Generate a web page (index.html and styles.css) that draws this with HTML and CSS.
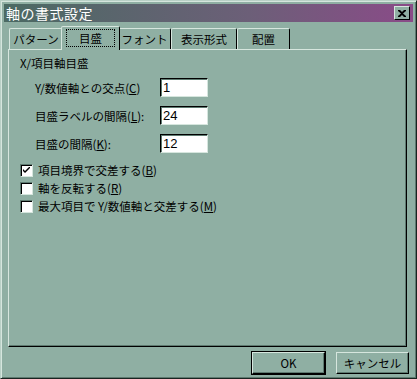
FILE: index.html
```html
<!DOCTYPE html>
<html lang="ja">
  <head>
    <meta charset="UTF-8" />
    <title>軸の書式設定</title>
    <link rel="stylesheet" href="styles.css">
  </head>
  <body>
    <div class="window">
      <div class="titlebar">
        <span class="title">軸の書式設定</span>
        <span class="close">
          <svg width="8" height="7" viewBox="0 0 8 7">
            <path d="M0 0h2l2 2 2-2h2v1L5 3.5 8 6v1H6L4 5 2 7H0V6l3-2.5L0 1z" fill="#000" />
          </svg>
        </span>
      </div>

      <div class="tabs">
        <div class="tab">パターン</div>
        <div class="tab selected"><span class="focus">目盛</span></div>
        <div class="tab">フォント</div>
        <div class="tab">表示形式</div>
        <div class="tab">配置</div>
      </div>

      <div class="panel">
        <div class="group-label">X/項目軸目盛</div>
        <div class="field">
          <label>Y/数値軸との交点(<u>C</u>)</label>
          <div class="input">1</div>
        </div>
        <div class="field">
          <label>目盛ラベルの間隔(<u>L</u>):</label>
          <div class="input">24</div>
        </div>
        <div class="field">
          <label>目盛の間隔(<u>K</u>):</label>
          <div class="input">12</div>
        </div>

        <div class="checks">
          <div class="check">
            <span class="box checked">
              <svg width="7" height="7" viewBox="0 0 7 7">
                <path d="M0 2l2 2 5-5v2L2 6 0 4z" fill="#000" />
              </svg>
            </span>
            <span>項目境界で交差する(<u>B</u>)</span>
          </div>
          <div class="check">
            <span class="box"></span>
            <span>軸を反転する(<u>R</u>)</span>
          </div>
          <div class="check">
            <span class="box"></span>
            <span>最大項目で Y/数値軸と交差する(<u>M</u>)</span>
          </div>
        </div>
      </div>

      <div class="buttons">
        <div class="btn default"><span>OK</span></div>
        <div class="btn"><span>キャンセル</span></div>
      </div>
    </div>
  </body>
</html>
```

FILE: styles.css
```css
* {
  box-sizing: border-box;
  margin: 0;
  padding: 0;
}

body {
  width: 417px;
  height: 379px;
  font-family: "Noto Sans CJK JP", "Liberation Sans", sans-serif;
  font-size: 11.5px;
  color: #000;
  background-color: #8fafa3;
}

u {
  text-underline-offset: 1px;
}

.window {
  width: 417px;
  height: 379px;
  padding: 3px;
  border: 1px solid;
  border-color: #b9d0c6 #1a2420 #1a2420 #b9d0c6;
  box-shadow: inset 1px 1px 0 #d6e6de, inset -1px -1px 0 #5e7a70;
  display: flex;
  flex-direction: column;
}

.titlebar {
  height: 18px;
  display: flex;
  align-items: center;
  justify-content: space-between;
  padding: 0 3px 0 2px;
  background: linear-gradient(to right, #4b6a63, #6c5f78 60%, #8a4b88);
}

.title {
  color: #fff;
  font-size: 14px;
  line-height: 18px;
  letter-spacing: 0.5px;
}

.close {
  width: 16px;
  height: 14px;
  background-color: #8fafa3;
  border: 1px solid;
  border-color: #d6e6de #000 #000 #d6e6de;
  display: flex;
  align-items: center;
  justify-content: center;
}

.tabs {
  display: flex;
  align-items: flex-end;
  height: 26px;
  padding: 0 0 0 5px;
  margin-top: 1px;
}

.tab {
  height: 21px;
  border: 1px solid;
  border-bottom: none;
  border-color: #d6e6de #000 transparent #d6e6de;
  border-radius: 2px 2px 0 0;
  line-height: 20px;
  text-align: center;
  white-space: nowrap;
}

.tab:nth-child(1) { width: 54px; }
.tab:nth-child(2) { width: 55px; }
.tab:nth-child(3) { width: 53px; }
.tab:nth-child(4) { width: 66px; }
.tab:nth-child(5) { width: 53px; }

.tab.selected {
  height: 24px;
  position: relative;
  z-index: 1;
  margin: 0 -2px -1px;
  width: 59px;
  padding: 2px 4px 0;
  background-color: #8fafa3;
}

.focus {
  display: block;
  height: 18px;
  line-height: 16px;
  border: 1px dotted #000;
}

.panel {
  width: 399px;
  height: 298px;
  margin-left: 4px;
  border: 1px solid;
  border-color: #d6e6de #000 #000 #d6e6de;
  box-shadow: inset -1px -1px 0 #5e7a70;
  padding: 5px 11px;
  display: flex;
  flex-direction: column;
}

.group-label {
  line-height: 16px;
  margin-bottom: 7px;
}

.field {
  display: flex;
  align-items: center;
  height: 19px;
  margin-bottom: 9px;
  padding-left: 15px;
}

.field label {
  width: 125px;
}

.input {
  width: 48px;
  height: 19px;
  background-color: #fff;
  border: 1px solid;
  border-color: #000 #d6e6de #d6e6de #000;
  box-shadow: inset 1px 1px 0 #5e7a70;
  font-family: "Liberation Sans", sans-serif;
  font-size: 13px;
  line-height: 17px;
  padding-left: 2px;
}

.checks {
  margin-top: 1px;
  display: flex;
  flex-direction: column;
  gap: 4px;
}

.check {
  display: flex;
  align-items: center;
  gap: 5px;
  height: 14px;
}

.box {
  width: 13px;
  height: 13px;
  background-color: #fff;
  border: 1px solid;
  border-color: #5e7a70 #d6e6de #d6e6de #5e7a70;
  box-shadow: inset 1px 1px 0 #000;
  display: flex;
  align-items: center;
  justify-content: center;
}

.buttons {
  display: flex;
  justify-content: flex-end;
  gap: 11px;
  padding: 5px 4px 0 0;
}

.btn {
  width: 73px;
  height: 22px;
  border: 1px solid;
  border-color: #d6e6de #000 #000 #d6e6de;
  box-shadow: inset -1px -1px 0 #5e7a70;
  display: flex;
  align-items: center;
  justify-content: center;
}

.btn.default {
  outline: 1px solid #000;
}
```
